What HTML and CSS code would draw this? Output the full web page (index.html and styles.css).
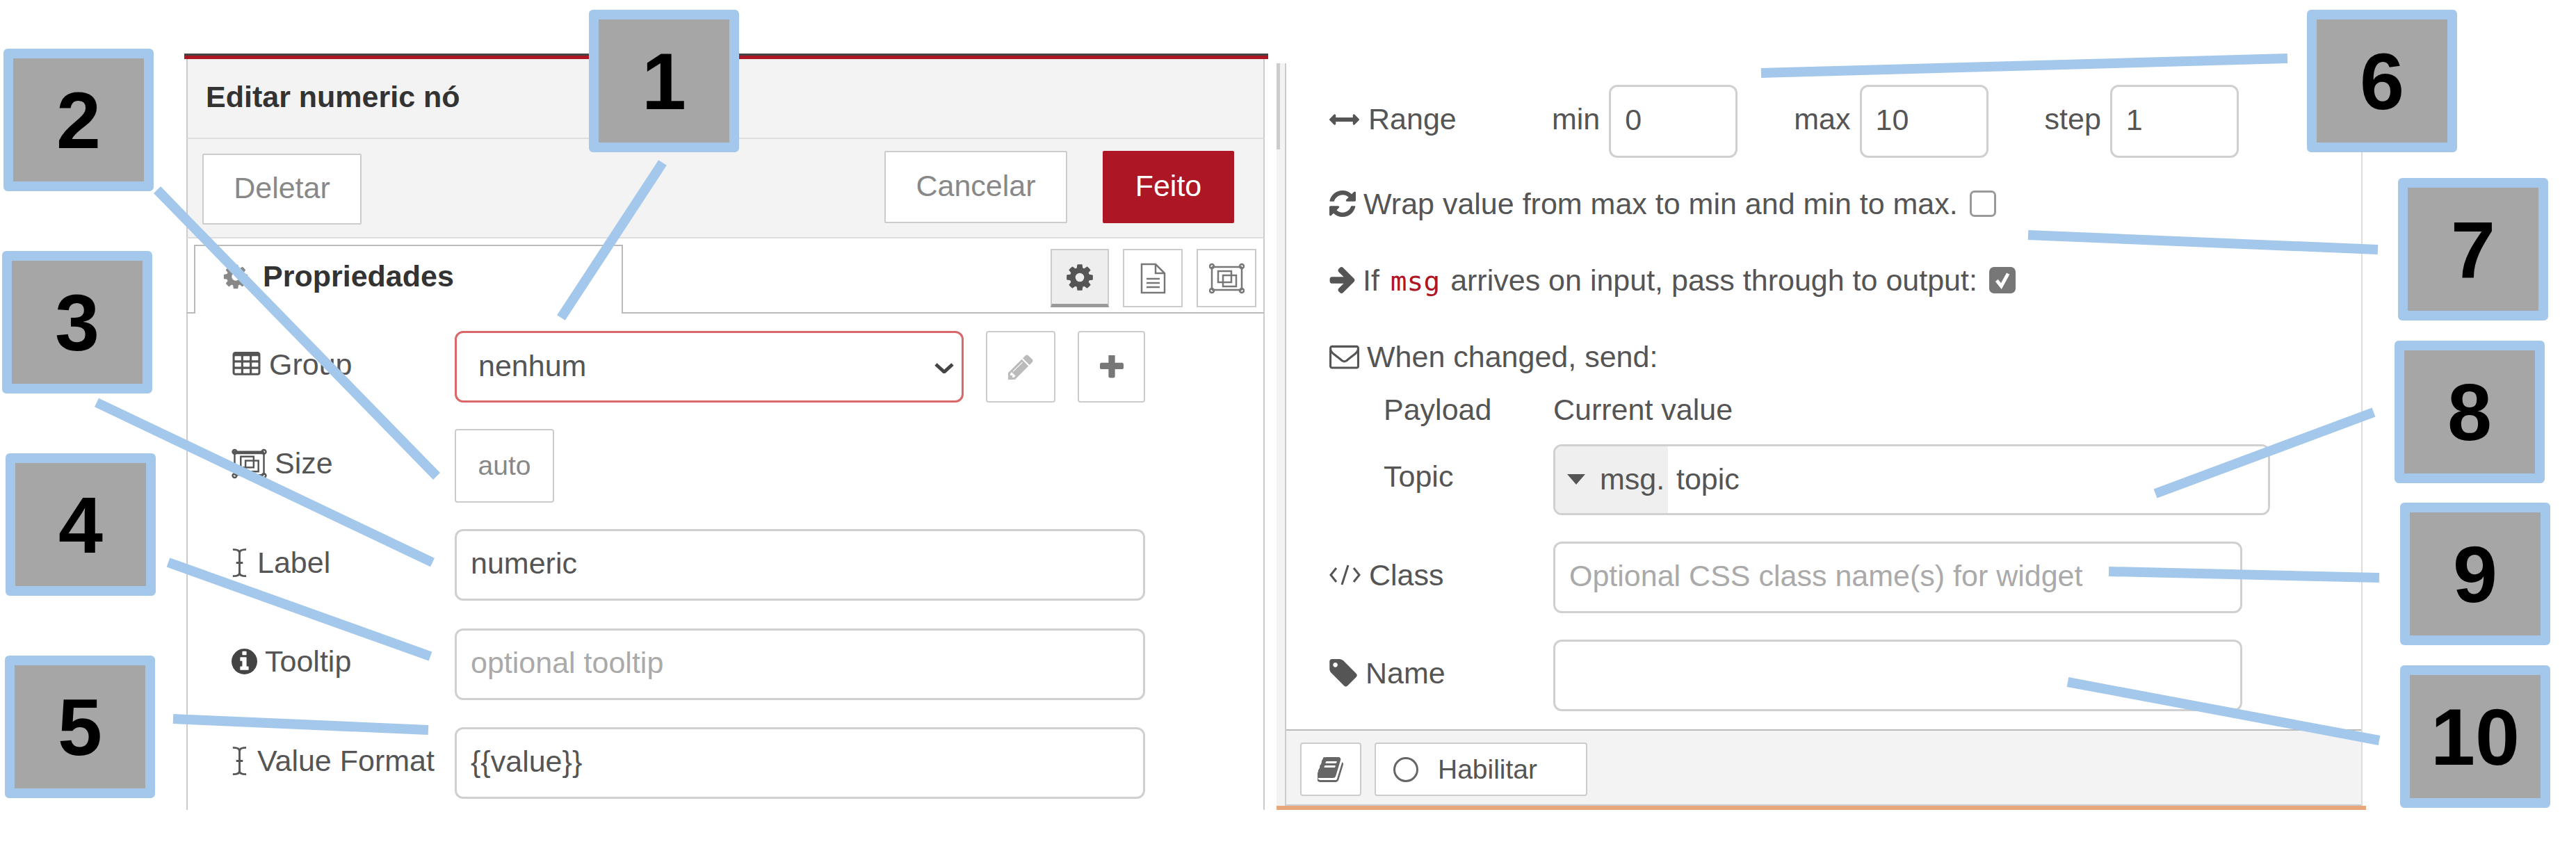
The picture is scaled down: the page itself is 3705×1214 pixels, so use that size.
FILE: index.html
```html
<!DOCTYPE html>
<html lang="en">
<head>
    <meta charset="UTF-8">
    <title>Editar numeric nó</title>
    <link rel="stylesheet" href="styles.css">
</head>
<body>

<div class="shot">

    <!-- left panel: node editor -->
    <div class="editor">
        <div class="editor-inner">
            <div class="editor-head"><span>Editar numeric nó</span></div>

            <div class="toolbar">
                <button class="btn btn-delete">Deletar</button>
                <div class="toolbar-right">
                    <button class="btn btn-cancel">Cancelar</button>
                    <button class="btn btn-done">Feito</button>
                </div>
            </div>

            <div class="tabs">
                <div class="tab">
                    <svg class="tab-gear" viewBox="0 0 1792 1792"><path d="M1152 896q0-106-75-181t-181-75-181 75-75 181 75 181 181 75 181-75 75-181zm512-109v222q0 12-8 23t-20 13l-185 28q-19 54-39 91 35 50 107 138 10 12 10 25t-9 23q-27 37-99 108t-94 71q-12 0-26-9l-138-108q-44 23-91 38-16 136-29 186-7 28-36 28h-222q-14 0-24.500-8.500t-11.500-21.500l-28-184q-49-16-90-37l-141 107q-10 9-25 9-14 0-25-11-126-114-165-168-7-10-7-23 0-12 8-23 15-21 51-66.500t54-70.500q-27-50-41-99l-183-27q-13-2-21-12.500t-8-23.500v-222q0-12 8-23t19-13l186-28q14-46 39-92-40-57-107-138-10-12-10-24 0-10 9-23 26-36 98.500-107.500t94.500-71.500q13 0 26 10l138 107q44-23 91-38 16-136 29-186 7-28 36-28h222q14 0 24.500 8.500t11.500 21.500l28 184q49 16 90 37l142-107q9-9 24-9 13 0 25 10 129 119 165 170 7 8 7 22 0 12-8 23-15 21-51 66.500t-54 70.500q26 50 41 98l183 28q13 2 21 12.500t8 23.500z"/></svg>
                    <span>Propriedades</span>
                </div>
                <div class="tab-btns">
                    <div class="tab-btn tab-btn-on">
                        <svg class="gear-lg" viewBox="0 0 1792 1792"><path d="M1152 896q0-106-75-181t-181-75-181 75-75 181 75 181 181 75 181-75 75-181zm512-109v222q0 12-8 23t-20 13l-185 28q-19 54-39 91 35 50 107 138 10 12 10 25t-9 23q-27 37-99 108t-94 71q-12 0-26-9l-138-108q-44 23-91 38-16 136-29 186-7 28-36 28h-222q-14 0-24.500-8.500t-11.500-21.500l-28-184q-49-16-90-37l-141 107q-10 9-25 9-14 0-25-11-126-114-165-168-7-10-7-23 0-12 8-23 15-21 51-66.500t54-70.500q-27-50-41-99l-183-27q-13-2-21-12.500t-8-23.500v-222q0-12 8-23t19-13l186-28q14-46 39-92-40-57-107-138-10-12-10-24 0-10 9-23 26-36 98.500-107.500t94.500-71.500q13 0 26 10l138 107q44-23 91-38 16-136 29-186 7-28 36-28h222q14 0 24.500 8.500t11.500 21.500l28 184q49 16 90 37l142-107q9-9 24-9 13 0 25 10 129 119 165 170 7 8 7 22 0 12-8 23-15 21-51 66.500t-54 70.500q26 50 41 98l183 28q13 2 21 12.500t8 23.500z"/></svg>
                    </div>
                    <div class="tab-btn">
                        <svg class="doc-icon" viewBox="0 0 37 45" fill="none" stroke="#777" stroke-width="2.5"><path d="M2 2h20l13 13v28H2z"/><path d="M22 2v13h13"/><path d="M9 23h19M9 29h19M9 35h19"/></svg>
                    </div>
                    <div class="tab-btn">
                        <svg class="frame-icon" viewBox="0 0 51 45" fill="none" stroke="#777" stroke-width="2.5"><path d="M4 6h43M4 39h43M4 6v33M47 6v33"/><rect x="13" y="12" width="19" height="16"/><rect x="20" y="18" width="19" height="16"/><circle cx="4" cy="5" r="3"/><circle cx="47" cy="5" r="3"/><circle cx="4" cy="40" r="3"/><circle cx="47" cy="40" r="3"/></svg>
                    </div>
                </div>
            </div>

            <form class="form">
                <div class="row">
                    <label class="row-label">
                        <svg class="ic-table" viewBox="0 0 1792 1792" fill="#555"><path d="M576 1376v-192q0-14-9-23t-23-9h-320q-14 0-23 9t-9 23v192q0 14 9 23t23 9h320q14 0 23-9t9-23zm0-384v-192q0-14-9-23t-23-9h-320q-14 0-23 9t-9 23v192q0 14 9 23t23 9h320q14 0 23-9t9-23zm512 384v-192q0-14-9-23t-23-9h-320q-14 0-23 9t-9 23v192q0 14 9 23t23 9h320q14 0 23-9t9-23zm-512-768v-192q0-14-9-23t-23-9h-320q-14 0-23 9t-9 23v192q0 14 9 23t23 9h320q14 0 23-9t9-23zm512 384v-192q0-14-9-23t-23-9h-320q-14 0-23 9t-9 23v192q0 14 9 23t23 9h320q14 0 23-9t9-23zm512 384v-192q0-14-9-23t-23-9h-320q-14 0-23 9t-9 23v192q0 14 9 23t23 9h320q14 0 23-9t9-23zm-512-768v-192q0-14-9-23t-23-9h-320q-14 0-23 9t-9 23v192q0 14 9 23t23 9h320q14 0 23-9t9-23zm512 384v-192q0-14-9-23t-23-9h-320q-14 0-23 9t-9 23v192q0 14 9 23t23 9h320q14 0 23-9t9-23zm0-384v-192q0-14-9-23t-23-9h-320q-14 0-23 9t-9 23v192q0 14 9 23t23 9h320q14 0 23-9t9-23zm128-320v1088q0 66-47 113t-113 47h-1344q-66 0-113-47t-47-113v-1088q0-66 47-113t113-47h1344q66 0 113 47t47 113z"/></svg>
                        <span>Group</span>
                    </label>
                    <div class="select-wrap">
                        <select class="field select-bad"><option>nenhum</option></select>
                        <svg class="chevron" viewBox="0 0 28 15" fill="none" stroke="#444" stroke-width="5"><path d="M2 2l12 11L26 2"/></svg>
                    </div>
                    <div class="icon-btn">
                        <svg class="ic-pencil" viewBox="128 128 1536 1536" fill="#bbb"><path d="M491 1536l91-91-235-235-91 91v107h128v128h107zm523-928q0-22-22-22-10 0-17 7l-542 542q-7 7-7 17 0 22 22 22 10 0 17-7l542-542q7-7 7-17zm-54-192l416 416-832 832h-416v-416zm683 96q0 53-37 90l-166 166-416-416 166-165q36-38 90-38 53 0 91 38l235 234q37 39 37 91z"/></svg>
                    </div>
                    <div class="icon-btn icon-btn-plus">
                        <svg class="ic-plus" viewBox="192 192 1408 1408" fill="#777"><path d="M1600 736v192q0 40-28 68t-68 28h-416v416q0 40-28 68t-68 28h-192q-40 0-68-28t-28-68v-416h-416q-40 0-68-28t-28-68v-192q0-40 28-68t68-28h416v-416q0-40 28-68t68-28h192q40 0 68 28t28 68v416h416q40 0 68 28t28 68z"/></svg>
                    </div>
                </div>

                <div class="row">
                    <label class="row-label">
                        <svg class="ic-size" viewBox="0 0 51 45" fill="none" stroke="#555" stroke-width="2.500"><path d="M4 6h43M4 39h43M4 6v33M47 6v33"/><path d="M2 6h45" stroke-width="5"/><rect x="13" y="12" width="19" height="16"/><rect x="20" y="18" width="19" height="16"/><circle cx="4" cy="5" r="3"/><circle cx="47" cy="5" r="3"/><circle cx="4" cy="40" r="3"/><circle cx="47" cy="40" r="3"/></svg>
                        <span>Size</span>
                    </label>
                    <div class="size-btn">auto</div>
                </div>

                <div class="row">
                    <label class="row-label">
                        <svg class="ic-cursor" viewBox="0 0 24 44" fill="none" stroke="#555" stroke-width="3"><path d="M2 2c6 0 10 1 10 5v30c0 4-4 5-10 5M22 2c-6 0-10 1-10 5v30c0 4 4 5 10 5M7 22h10"/></svg>
                        <span>Label</span>
                    </label>
                    <input class="field field-wide" type="text" value="numeric">
                </div>

                <div class="row">
                    <label class="row-label">
                        <svg class="ic-info" viewBox="128 128 1536 1536" fill="#444"><path d="M1152 1376v-160q0-14-9-23t-23-9h-96v-512q0-14-9-23t-23-9h-320q-14 0-23 9t-9 23v160q0 14 9 23t23 9h96v320h-96q-14 0-23 9t-9 23v160q0 14 9 23t23 9h448q14 0 23-9t9-23zm-128-896v-160q0-14-9-23t-23-9h-192q-14 0-23 9t-9 23v160q0 14 9 23t23 9h192q14 0 23-9t9-23zm640 416q0 209-103 385.500t-279.500 279.500-385.500 103-385.500-103-279.500-279.500-103-385.500 103-385.500 279.500-279.500 385.500-103 385.500 103 279.500 279.500 103 385.500z"/></svg>
                        <span>Tooltip</span>
                    </label>
                    <input class="field field-wide" type="text" placeholder="optional tooltip">
                </div>

                <div class="row">
                    <label class="row-label">
                        <svg class="ic-cursor" viewBox="0 0 24 44" fill="none" stroke="#555" stroke-width="3"><path d="M2 2c6 0 10 1 10 5v30c0 4-4 5-10 5M22 2c-6 0-10 1-10 5v30c0 4 4 5 10 5M7 22h10"/></svg>
                        <span>Value Format</span>
                    </label>
                    <input class="field field-wide" type="text" value="{{value}}">
                </div>
            </form>
        </div>
    </div>

    <!-- right panel: the rest of the form, scrolled -->
    <div class="side">
        <div class="side-main">
            <div class="scroll-strip"><div class="scroll-thumb"></div></div>
            <div class="side-content">
                <div class="side-rows">
                    <div class="range-row">
                        <span class="range-label">
                            <svg class="ic-range" viewBox="0 576 1792 640" fill="#555"><path d="M1792 896q0 26-19 45l-256 256q-19 19-45 19t-45-19-19-45v-128h-1024v128q0 26-19 45t-45 19-45-19l-256-256q-19-19-19-45t19-45l256-256q19-19 45-19t45 19 19 45v128h1024v-128q0-26 19-45t45-19 45 19l256 256q19 19 19 45z"/></svg>
                            <span>Range</span>
                        </span>
                        <span class="range-text">min</span>
                        <input class="field range-field" type="text" value="0">
                        <span class="range-text range-gap">max</span>
                        <input class="field range-field" type="text" value="10">
                        <span class="range-text range-gap">step</span>
                        <input class="field range-field" type="text" value="1">
                    </div>

                    <div class="text-row text-row-first">
                        <svg class="ic-refresh" viewBox="128 128 1536 1536" fill="#555"><path d="M1639 1056q0 5-1 7-64 268-268 434.500t-478 166.500q-146 0-282.500-55t-243.500-157l-129 129q-19 19-45 19t-45-19-19-45v-448q0-26 19-45t45-19h448q26 0 45 19t19 45-19 45l-137 137q71 66 161 102t187 36q134 0 250-65t186-179q11-17 53-117 8-23 30-23h192q13 0 22.500 9.500t9.500 22.500zm25-800v448q0 26-19 45t-45 19h-448q-26 0-45-19t-19-45 19-45l138-138q-148-137-349-137-134 0-250 65t-186 179q-11 17-53 117-8 23-30 23h-199q-13 0-22.500-9.500t-9.500-22.500v-7q65-268 270-434.500t480-166.500q146 0 284 55.500t245 156.500l130-129q19-19 45-19t45 19 19 45z"/></svg>
                        <span>Wrap value from max to min and min to max.</span>
                        <span class="check"></span>
                    </div>

                    <div class="text-row">
                        <svg class="ic-arrow" viewBox="128 180 1472 1560" fill="#555"><path d="M1600 960q0 54-37 91l-651 651q-39 37-91 37-51 0-90-37l-75-75q-38-38-38-91t38-91l293-293h-704q-52 0-84.500-37.500t-32.500-90.500v-128q0-53 32.500-90.500t84.500-37.500h704l-293-294q-38-36-38-90t38-90l75-75q38-38 90-38 53 0 91 38l651 651q37 35 37 90z"/></svg>
                        <span>If <code class="msg">msg</code> arrives on input, pass through to output:</span>
                        <span class="check check-on"><svg viewBox="0 0 38 39" fill="none" stroke="#fff" stroke-width="6"><path d="M9 20l8 10L29 8"/></svg></span>
                    </div>

                    <div class="text-row">
                        <svg class="ic-mail" viewBox="0 220 1792 1460" fill="#555"><path d="M1664 1504v-768q-32 36-69 66-268 206-426 338-51 43-83 67t-86.500 48.500-102.500 24.500h-2q-48 0-102.500-24.500t-86.500-48.500-83-67q-158-132-426-338-37-30-69-66v768q0 13 9.500 22.500t22.500 9.500h1472q13 0 22.500-9.500t9.500-22.500zm0-1051v-24.500l-.5-13-3-12.500-5.500-9-9-7.500-14-2.500h-1472q-13 0-22.500 9.500t-9.500 22.500q0 168 147 284 193 152 401 317 6 5 35 29.500t46 37.500 44.500 31.500 50.500 27.500 43 9h2q20 0 43-9t50.500-27.500 44.500-31.500 46-37.500 35-29.500q208-165 401-317 54-43 100.500-115.500t46.500-131.500zm128-37v1088q0 66-47 113t-113 47h-1472q-66 0-113-47t-47-113v-1088q0-66 47-113t113-47h1472q66 0 113 47t47 113z"/></svg>
                        <span>When changed, send:</span>
                    </div>

                    <div class="payload-row">
                        <span class="sub-label">Payload</span>
                        <span>Current value</span>
                    </div>

                    <div class="topic-row">
                        <span class="sub-label">Topic</span>
                        <div class="typed">
                            <div class="typed-type">
                                <svg class="ic-caret" viewBox="0 0 26 15" fill="#555"><path d="M0 0h26L13 15z"/></svg>
                                <span>msg.</span>
                            </div>
                            <input class="typed-input" type="text" value="topic">
                        </div>
                    </div>

                    <div class="field-row">
                        <span class="field-label">
                            <svg class="ic-code" viewBox="0 0 45 30" fill="none" stroke="#555" stroke-width="3"><path d="M10 5L2 15l8 10M35 5l8 10-8 10M27 1l-9 28"/></svg>
                            <span>Class</span>
                        </span>
                        <input class="field side-field" type="text" placeholder="Optional CSS class name(s) for widget">
                    </div>

                    <div class="field-row">
                        <span class="field-label">
                            <svg class="ic-tag" viewBox="128 128 1515 1536" fill="#555"><path d="M576 448q0-53-37.500-90.500t-90.500-37.500-90.500 37.500-37.500 90.500 37.500 90.500 90.500 37.500 90.500-37.500 37.500-90.500zm1067 576q0 53-37 90l-491 492q-39 37-91 37-53 0-90-37l-715-716q-38-37-64.500-101t-26.500-117v-416q0-52 38-90t90-38h416q53 0 117 26.500t102 64.500l715 714q37 39 37 91z"/></svg>
                            <span>Name</span>
                        </span>
                        <input class="field side-field" type="text">
                    </div>
                </div>

                <div class="side-foot">
                    <div class="foot-btn foot-book">
                        <svg class="ic-book" viewBox="128 128 1536 1536" fill="#666"><path d="M1639 478q40 57 18 129l-275 906q-19 64-76.500 107.500t-122.500 43.500h-923q-77 0-148.500-53.500t-99.500-131.500q-24-67-2-127 0-4 3-27t4-37q1-8-3-21.500t-3-19.500q2-11 8-21t16.500-23.500 16.500-23.500q23-38 45-91.500t30-91.500q3-10 .5-30t-.5-28q3-11 17-28t17-23q21-36 42-92t25-90q1-9-2.500-32t.5-28q4-13 22-30.500t22-22.500q19-26 42.500-84.500t27.500-96.500q1-8-3-25.500t-2-26.500q2-8 9-18t18-23 17-21q8-12 16.500-30.500t15-35 16-36 19.500-32 26.500-23.500 36-11.500 47.500 5.500l-1 3q38-9 51-9h761q74 0 114 56t18 130l-274 906q-36 119-71.500 153.500t-128.500 34.500h-869q-27 0-38 15-11 16-1 43 24 70 144 70h923q29 0 56-15.500t35-41.500l300-987q7-22 5-57 38 15 59 43zm-1064 2q-4 13 2 22.500t20 9.500h608q13 0 25.500-9.500t16.500-22.500l21-64q4-13-2-22.500t-20-9.500h-608q-13 0-25.500 9.500t-16.500 22.500zm-83 256q-4 13 2 22.500t20 9.500h608q13 0 25.500-9.500t16.500-22.500l21-64q4-13-2-22.500t-20-9.500h-608q-13 0-25.500 9.500t-16.500 22.500z"/></svg>
                    </div>
                    <div class="foot-btn foot-enable">
                        <span class="enable-dot"></span>
                        <span>Habilitar</span>
                    </div>
                </div>
            </div>
        </div>
    </div>

    <!-- callout lines and numbered boxes on top of the screenshot -->
    <svg class="lines" viewBox="0 0 3705 1214" stroke="#a4c8eb" stroke-width="14">
        <line x1="953" y1="234" x2="807" y2="457"/>
        <line x1="226" y1="273" x2="628" y2="685"/>
        <line x1="139" y1="579" x2="622" y2="809"/>
        <line x1="242" y1="809" x2="619" y2="944"/>
        <line x1="249" y1="1034" x2="616" y2="1050"/>
        <line x1="2533" y1="105" x2="3290" y2="84"/>
        <line x1="2917" y1="338" x2="3420" y2="359"/>
        <line x1="3414" y1="593" x2="3100" y2="710"/>
        <line x1="3033" y1="822" x2="3422" y2="831"/>
        <line x1="2974" y1="981" x2="3422" y2="1065"/>
    </svg>

    <div class="callout c1">1</div>
    <div class="callout c2">2</div>
    <div class="callout c3">3</div>
    <div class="callout c4">4</div>
    <div class="callout c5">5</div>
    <div class="callout c6">6</div>
    <div class="callout c7">7</div>
    <div class="callout c8">8</div>
    <div class="callout c9">9</div>
    <div class="callout c10">10</div>
</div>

</body>
</html>
```

FILE: styles.css
```css
* {
    box-sizing: border-box;
}
body {
    margin: 0;
    background: #fff;
    font-family: "Liberation Sans", Arial, sans-serif;
    font-size: 43px;
    color: #555;
}
svg {
    flex: none;
    display: block;
}
.shot {
    position: relative;
    display: flex;
    align-items: flex-start;
    width: 3705px;
    height: 1214px;
    padding: 77px 0 0 265px;
    overflow: hidden;
}

/* left panel */
.editor {
    flex: none;
    width: 1559px;
    height: 1088px;
    border-top: 3px solid #444;
}
.editor-inner {
    height: 1085px;
    border-top: 5px solid #ad1625;
}
.editor-head,
.toolbar,
.tabs,
.form {
    margin: 0 5px 0 3px;
    border-left: 2px solid #ccc;
    border-right: 2px solid #ccc;
}
.editor-head {
    height: 115px;
    padding-left: 26px;
    line-height: 108px;
    font-weight: bold;
    color: #333;
    background: #f3f3f3;
    border-bottom: 2px solid #ddd;
}
.toolbar {
    display: flex;
    justify-content: space-between;
    height: 143px;
    padding: 17px 42px 0 21px;
    background: #f3f3f3;
    border-bottom: 2px solid #ddd;
}
.toolbar-right {
    display: flex;
    gap: 51px;
}
.btn {
    height: 104px;
    padding: 0 0 4px;
    font: inherit;
    border: 2px solid #ccc;
    border-radius: 2px;
    background: #fff;
    color: #888;
}
.btn-delete {
    width: 229px;
    height: 102px;
    margin-top: 4px;
}
.btn-cancel {
    width: 263px;
}
.btn-done {
    width: 189px;
    color: #fff;
    background: #ad1625;
    border-color: #ad1625;
}

.tabs {
    display: flex;
    justify-content: space-between;
    align-items: flex-end;
    height: 108px;
    padding: 0 10px 0 9px;
    border-bottom: 2px solid #bbb;
}
.tab {
    display: flex;
    align-items: center;
    gap: 19px;
    width: 617px;
    height: 99px;
    margin-bottom: -2px;
    padding: 0 0 10px 38px;
    font-weight: bold;
    color: #333;
    background: #fff;
    border: 2px solid #bbb;
    border-bottom: none;
}
.tab-gear {
    width: 40px;
    height: 40px;
    fill: #888;
}
.tab-btns {
    display: flex;
    gap: 20px;
    align-self: flex-start;
    margin-top: 15px;
}
.tab-btn {
    display: flex;
    align-items: center;
    justify-content: center;
    width: 86px;
    height: 84px;
    border: 2px solid #ccc;
    background: #fff;
}
.tab-btn-on {
    width: 84px;
    background: #eee;
    border-bottom: 5px solid #999;
}
.gear-lg {
    width: 44px;
    height: 44px;
    fill: #555;
}
.doc-icon {
    width: 37px;
    height: 45px;
}
.frame-icon {
    width: 51px;
    height: 45px;
}

/* left form */
.form {
    height: 714px;
    padding: 25px 0 0 63px;
}
.row {
    display: flex;
    align-items: flex-start;
    height: 142.5px;
}
.row-label {
    display: flex;
    align-items: center;
    gap: 14px;
    flex: none;
    width: 321px;
    height: 96px;
}
.field {
    display: block;
    height: 103px;
    padding: 0 20px 4px;
    font: inherit;
    color: #555;
    background: #fff;
    border: 3px solid #d0d0d0;
    border-radius: 12px;
    outline: none;
}
.field::placeholder {
    color: #aaa;
}
.field-wide {
    width: 993px;
}
.select-wrap {
    position: relative;
    width: 732px;
}
.select-bad {
    width: 100%;
    padding-left: 31px;
    border-color: #d9686a;
    appearance: none;
}
.chevron {
    position: absolute;
    top: 46px;
    right: 14px;
    width: 28px;
    height: 15px;
}
.icon-btn {
    display: flex;
    align-items: center;
    justify-content: center;
    width: 100px;
    height: 103px;
    margin-left: 32px;
    border: 2px solid #ccc;
    border-radius: 4px;
}
.icon-btn-plus {
    width: 97px;
}
.size-btn {
    display: flex;
    align-items: center;
    justify-content: center;
    width: 143px;
    height: 106px;
    margin-top: -2px;
    color: #888;
    font-size: 39px;
    border: 2px solid #ccc;
    border-radius: 4px;
}
.ic-table {
    width: 43px;
    height: 43px;
    margin-right: -3px;
}
.ic-pencil {
    width: 36px;
    height: 36px;
}
.ic-plus {
    width: 34px;
    height: 34px;
}
.ic-size {
    width: 51px;
    height: 44px;
    margin-right: -3px;
}
.ic-cursor {
    width: 23px;
    height: 43px;
}
.ic-info {
    width: 37px;
    height: 37px;
    margin-right: -3px;
}

/* right panel */
.side {
    flex: none;
    display: flex;
    flex-direction: column;
    width: 1567px;
    height: 1074px;
    margin: 14px 0 0 12px;
    border-bottom: 6px solid #e8a87c;
}
.side-main {
    display: flex;
    flex: 1;
    padding-right: 5px;
    min-height: 0;
}
.scroll-strip {
    flex: none;
    width: 12px;
    background: #f3f3f3;
}
.scroll-thumb {
    width: 5px;
    height: 124px;
    background: #ccc;
}
.side-content {
    display: flex;
    flex-direction: column;
    justify-content: space-between;
    flex: 1;
    border-left: 2px solid #ccc;
    border-right: 2px solid #ddd;
}
.side-rows {
    padding: 31px 0 0 62px;
}
.range-row {
    display: flex;
    align-items: center;
    height: 105px;
}
.range-label {
    display: flex;
    align-items: center;
    gap: 13px;
    width: 320px;
    padding-bottom: 6px;
}
.range-text {
    padding-bottom: 6px;
}
.range-field {
    width: 185px;
    height: 105px;
    margin-left: 13px;
}
.range-gap {
    margin-left: 81px;
}
.text-row {
    display: flex;
    align-items: center;
    gap: 11px;
    height: 110px;
    white-space: nowrap;
}
.text-row-first {
    margin-top: 11px;
}
.msg {
    margin: 0 3px 0 4px;
    font-family: "DejaVu Sans Mono", monospace;
    font-size: 39.5px;
    color: #ad1625;
}
.check {
    flex: none;
    width: 38px;
    height: 38px;
    margin-left: 6px;
    border: 3px solid #999;
    border-radius: 7px;
    background: #fff;
}
.check-on {
    background: #777;
    border-color: #777;
}
.check-on svg {
    width: 32px;
    height: 32px;
}
.payload-row {
    display: flex;
    align-items: center;
    height: 50px;
    margin-top: -4px;
}
.sub-label {
    flex: none;
    width: 322px;
    padding-left: 78px;
}
.topic-row {
    display: flex;
    align-items: flex-start;
    margin-top: 25px;
}
.topic-row .sub-label {
    height: 96px;
    line-height: 92px;
}
.typed {
    display: flex;
    width: 1031px;
    height: 102px;
    border: 3px solid #d0d0d0;
    border-radius: 12px;
    overflow: hidden;
}
.typed-type {
    display: flex;
    align-items: center;
    gap: 21px;
    flex: none;
    width: 162px;
    padding: 0 0 2px 17px;
    background: #efefef;
}
.typed-input {
    flex: 1;
    padding: 0 12px 2px;
    font: inherit;
    color: #555;
    border: none;
    outline: none;
}
.ic-caret {
    width: 26px;
    height: 15px;
}
.field-row {
    display: flex;
    align-items: center;
    margin-top: 38px;
}
.field-label {
    display: flex;
    align-items: center;
    gap: 12px;
    flex: none;
    width: 322px;
    padding-bottom: 7px;
}
.side-field {
    width: 991px;
}
.ic-range {
    width: 43px;
    height: 16px;
}
.ic-refresh {
    width: 38px;
    height: 38px;
}
.ic-arrow {
    width: 37px;
    height: 38px;
}
.ic-mail {
    width: 43px;
    height: 35px;
}
.ic-code {
    width: 45px;
    height: 30px;
}
.ic-tag {
    width: 40px;
    height: 40px;
}

.side-foot {
    display: flex;
    gap: 19px;
    height: 110px;
    padding: 17px 0 0 20px;
    background: #f3f3f3;
    border-top: 2px solid #bbb;
    border-bottom: 2px solid #ccc;
}
.foot-btn {
    display: flex;
    align-items: center;
    height: 77px;
    background: #fff;
    border: 2px solid #ccc;
    border-radius: 4px;
    font-size: 39px;
}
.foot-book {
    justify-content: center;
    width: 88px;
}
.foot-enable {
    gap: 28px;
    width: 306px;
    padding-left: 25px;
}
.enable-dot {
    width: 36px;
    height: 36px;
    border: 3px solid #666;
    border-radius: 50%;
}
.ic-book {
    width: 38px;
    height: 36px;
}

/* callouts */
.lines {
    position: absolute;
    top: 0;
    left: 0;
    width: 3705px;
    height: 1214px;
}
.callout {
    position: absolute;
    display: flex;
    align-items: center;
    justify-content: center;
    width: 216px;
    height: 205px;
    font-size: 115px;
    font-weight: bold;
    color: #000;
    background: #a6a6a6;
    border: 14px solid #a4c8eb;
    border-radius: 6px;
}
.c1 { left: 847px; top: 14px; }
.c2 { left: 5px; top: 70px; }
.c3 { left: 3px; top: 361px; }
.c4 { left: 8px; top: 652px; }
.c5 { left: 7px; top: 943px; }
.c6 { left: 3318px; top: 14px; }
.c7 { left: 3449px; top: 256px; }
.c8 { left: 3444px; top: 490px; }
.c9 { left: 3452px; top: 723px; }
.c10 { left: 3452px; top: 957px; }
```
